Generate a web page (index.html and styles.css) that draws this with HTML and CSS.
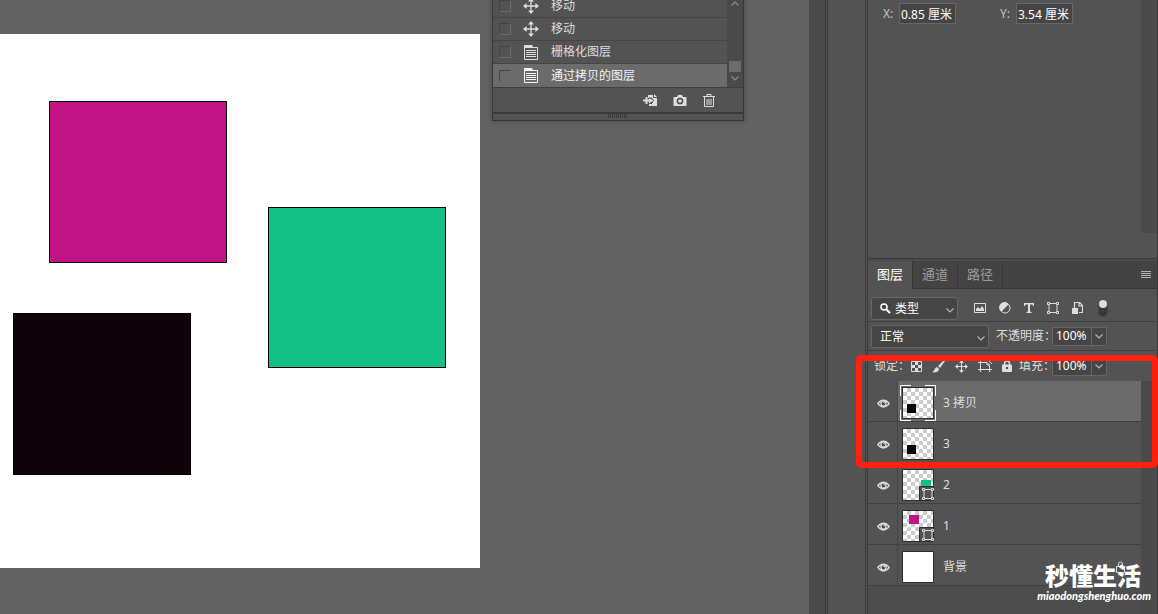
FILE: index.html
```html
<!DOCTYPE html>
<html lang="zh-CN">
<head>
<meta charset="utf-8">
<title>图层</title>
<link rel="stylesheet" href="styles.css">
</head>
<body>
<svg class="defs" aria-hidden="true">
  <defs>
    <pattern id="checker" width="8" height="8" patternUnits="userSpaceOnUse" x="1" y="1">
      <rect width="8" height="8" fill="#fff"/><path d="M4 0h4v4h-4zM0 4h4v4h-4z" fill="#cbcbcb"/>
    </pattern>
    <symbol id="move" viewBox="0 0 16 16"><path d="M8 2v12M2 8h12" stroke="currentColor" stroke-width="1.3"/><path d="M8 0l3 3.6H5zM8 16l3-3.6H5zM0 8l3.6-3v6zM16 8l-3.600-3v6z" fill="currentColor"/></symbol>
    <symbol id="doc" viewBox="0 0 14 15"><path d="M0 0h8l1 2H0z" fill="currentColor"/><path d="M.5 2v12.500h13V2.500H0M2 5.500h10M2 7.500h10M2 9.500h10M2 11.500h10" fill="none" stroke="currentColor"/></symbol>
    <symbol id="chev" viewBox="0 0 8 5"><path d="M.5.5L4 4 7.500.5" fill="none" stroke="currentColor" stroke-width="1.200"/></symbol>
    <symbol id="eye" viewBox="0 0 13 9"><path d="M0 4.500C3.500-1 9.500-1 13 4.500 9.500 10 3.500 10 0 4.500z" fill="currentColor"/><path d="M1.800 4.500C4.500 1 8.500 1 11.200 4.500 8.500 8 4.500 8 1.800 4.500z" fill="#535353"/><circle cx="6.500" cy="4.500" r="3.200" fill="currentColor"/><circle cx="6.500" cy="4.500" r="1.900" fill="#484848"/><circle cx="7.200" cy="3.600" r=".8" fill="currentColor"/></symbol>
    <symbol id="shape" viewBox="0 0 12 12"><path d="M2 2v8M10 2v8M2 1.500h8M2 10.500h8" stroke="currentColor" fill="none"/><path d="M.5.5h2v2h-2zM9.500.5h2v2h-2zM.5 9.500h2v2h-2zM9.500 9.500h2v2h-2z" fill="#484848" stroke="currentColor"/></symbol>
  </defs>
</svg>
<div class="app">
  <main class="workspace">
    <div class="artboard">
      <div class="block pink"></div>
      <div class="block green"></div>
      <div class="block black"></div>
    </div>
    <section class="history" aria-label="历史记录">
      <div class="history-body">
        <ul class="states">
          <li><label><input type="checkbox"><svg class="move-icon"><use href="#move"/></svg><span>移动</span></label></li>
          <li><label><input type="checkbox"><svg class="move-icon"><use href="#move"/></svg><span>移动</span></label></li>
          <li><label><input type="checkbox"><svg class="doc-icon"><use href="#doc"/></svg><span>栅格化图层</span></label></li>
          <li class="current"><label><input type="checkbox"><svg class="doc-icon"><use href="#doc"/></svg><span>通过拷贝的图层</span></label></li>
        </ul>
        <div class="scroll">
          <svg class="chev up"><use href="#chev"/></svg>
          <div class="handle"></div>
          <svg class="chev"><use href="#chev"/></svg>
        </div>
      </div>
      <div class="history-actions">
        <button aria-label="新建文档"><svg width="14" height="12" viewBox="0 0 14 12"><path d="M5 1h5v3h4v8H6v-2h3V4H5z" fill="currentColor"/><path d="M11 0l3 3h-3z" fill="currentColor"/><path d="M0 6.500h7M3.500 3v7" stroke="currentColor" stroke-width="2"/><path d="M6 3.500l4 3-4 3z" fill="currentColor"/><path d="M5.500 4h3l2 2.500-2 3" fill="none" stroke="#535353"/></svg></button>
        <button aria-label="新建快照"><svg width="14" height="11" viewBox="0 0 14 11"><path d="M1 2h3l1-2h4l1 2h3l.5.500v8l-.5.500H1l-.5-.5v-8z" fill="currentColor"/><circle cx="7" cy="6" r="2.600" fill="#ddd" stroke="#4b4b4b" stroke-width="1.500"/></svg></button>
        <button aria-label="删除"><svg width="12" height="13" viewBox="0 0 12 13"><path d="M0 2.500h12M4 2V.5h4V2M1.500 3v9.500h9V3M4 5v6M6 5v6M8 5v6" fill="none" stroke="currentColor"/></svg></button>
      </div>
      <div class="grip"><span></span></div>
    </section>
  </main>
  <div class="gutter"></div>
  <div class="dock"></div>
  <aside class="side">
    <section class="props">
      <div class="fields">
        <div class="field"><label for="px">X:</label><input id="px" type="text" value="0.85 厘米"></div>
        <div class="field"><label for="py">Y:</label><input id="py" type="text" value="3.54 厘米"></div>
      </div>
      <div class="track"></div>
    </section>
    <section class="layers">
      <nav class="tabs">
        <button class="active">图层</button><button>通道</button><button>路径</button>
        <button class="menu" aria-label="菜单"><svg width="10" height="8" viewBox="0 0 10 8"><path d="M0 .5h10M0 2.500h10M0 4.500h10M0 6.500h10" stroke="currentColor"/></svg></button>
      </nav>
      <div class="row filter">
        <div class="select kind">
          <svg class="search" width="11" height="11" viewBox="0 0 11 11"><circle cx="4" cy="4" r="3" fill="none" stroke="currentColor" stroke-width="1.500"/><path d="M6 6l4 4" stroke="currentColor" stroke-width="2.200"/></svg>
          <select aria-label="筛选类型"><option>类型</option></select>
          <svg class="chev"><use href="#chev"/></svg>
        </div>
        <div class="filters">
          <button aria-label="像素图层"><svg width="12" height="10" viewBox="0 0 12 10"><path d="M.5.500h11v9H.5z" fill="none" stroke="currentColor"/><path d="M2 8V6l2-2 2 2 2-3 2 3v2z" fill="currentColor"/></svg></button>
          <button aria-label="调整图层"><svg width="12" height="12" viewBox="0 0 12 12"><circle cx="6" cy="6" r="5" fill="none" stroke="currentColor"/><path d="M9.700 2.300A5.300 5.300 0 1 0 2.300 9.700z" fill="currentColor"/></svg></button>
          <button aria-label="文字图层"><svg width="10" height="10" viewBox="0 0 10 10"><path d="M0 0h10v3H9L8.500 1.500H6V8.500l1.500.5v1h-5V9L4 8.500v-7H1.500L1 3H0z" fill="currentColor"/></svg></button>
          <button aria-label="形状图层"><svg width="12" height="12"><use href="#shape"/></svg></button>
          <button aria-label="智能对象"><svg width="11" height="12" viewBox="0 0 11 12"><path d="M2.500 6V.5h5l3 3v7H7M7 .5V4h3.500" fill="none" stroke="currentColor" stroke-width="1.200"/><path d="M0 6h6v6H0z" fill="currentColor"/></svg></button>
          <button aria-label="打开图层过滤"><svg width="10" height="18" viewBox="0 0 10 18"><rect x=".5" y=".5" width="9" height="17" rx="4.500" fill="#383838" stroke="#474747"/><circle cx="5" cy="5" r="4" fill="#ddd"/></svg></button>
        </div>
      </div>
      <div class="row blend">
        <div class="select mode"><select aria-label="混合模式"><option>正常</option></select><svg class="chev"><use href="#chev"/></svg></div>
        <label for="opacity">不透明度：</label>
        <div class="number"><input id="opacity" type="text" value="100%"><button aria-label="调整不透明度"><svg class="chev"><use href="#chev"/></svg></button></div>
      </div>
      <div class="row lock">
        <span class="lock-label">锁定：</span>
        <div class="locks">
          <button aria-label="锁定透明像素"><svg width="11" height="11" viewBox="0 0 11 11"><path d="M.5.500h10v10H.5z" fill="none" stroke="currentColor"/><path d="M4 1h3v3H4zM1 4h3v3H1zM7 4h3v3H7zM4 7h3v3H4z" fill="currentColor"/></svg></button>
          <button aria-label="锁定图像像素"><svg width="13" height="13" viewBox="0 0 13 13"><path d="M12 0l1 1-5 7-2-2zM5 7l2 2c0 3-4 4-7 3 3-1 2-4 5-5z" fill="currentColor"/></svg></button>
          <button aria-label="锁定位置"><svg width="13" height="13"><use href="#move"/></svg></button>
          <button aria-label="锁定画板"><svg width="14" height="12" viewBox="0 0 14 12"><path d="M0 2.500h9M2.500 0v12M0 9.500h14M11.500 5v7M9 2.500l2.500 2.500M10 0l4 4M9 2.500V5h2.500" fill="none" stroke="currentColor"/></svg></button>
          <button aria-label="全部锁定"><svg width="10" height="12" viewBox="0 0 10 12"><path d="M2.500 5V3.500a2.500 2.500 0 0 1 5 0V5" fill="none" stroke="currentColor" stroke-width="1.500"/><rect y="4.500" width="10" height="7.500" rx="1" fill="currentColor"/><path d="M4 7h2v2H4z" fill="#484848"/></svg></button>
        </div>
        <label for="fill">填充：</label>
        <div class="number"><input id="fill" type="text" value="100%"><button aria-label="调整填充"><svg class="chev"><use href="#chev"/></svg></button></div>
      </div>
      <div class="layer-area">
        <ul class="layer-list">
          <li class="selected"><button class="eye" aria-label="可见性"><svg><use href="#eye"/></svg></button>
            <div class="entry"><svg class="thumb" viewBox="0 0 32 32"><path class="frame" d="M.5.500h31v31H.5z" fill="url(#checker)"/><path d="M5 17h9v9H5z" fill="#0f020b"/><path d="M-1.500 9V-1.500H9M23-1.500H33.500V9M33.500 23V33.500H23M9 33.500H-1.500V23" fill="none" stroke="#fff"/></svg><span>3 拷贝</span></div></li>
          <li><button class="eye" aria-label="可见性"><svg><use href="#eye"/></svg></button>
            <div class="entry"><svg class="thumb" viewBox="0 0 32 32"><path class="frame" d="M.5.500h31v31H.5z" fill="url(#checker)"/><path d="M5 17h9v9H5z" fill="#0f020b"/></svg><span>3</span></div></li>
          <li><button class="eye" aria-label="可见性"><svg><use href="#eye"/></svg></button>
            <div class="entry"><svg class="thumb" viewBox="0 0 32 32"><path class="frame" d="M.5.500h31v31H.5z" fill="url(#checker)"/><path d="M19 11h10v7H19z" fill="#14c086"/><path d="M17.500 17.500h14v14h-14z" fill="#535353" stroke="#2d2d2d"/><use href="#shape" x="20" y="19" width="12" height="12"/></svg><span>2</span></div></li>
          <li><button class="eye" aria-label="可见性"><svg><use href="#eye"/></svg></button>
            <div class="entry"><svg class="thumb" viewBox="0 0 32 32"><path class="frame" d="M.5.500h31v31H.5z" fill="url(#checker)"/><path d="M7 5h10v9H7z" fill="#c01385"/><path d="M17.500 17.500h14v14h-14z" fill="#535353" stroke="#2d2d2d"/><use href="#shape" x="20" y="19" width="12" height="12"/></svg><span>1</span></div></li>
          <li><button class="eye" aria-label="可见性"><svg><use href="#eye"/></svg></button>
            <div class="entry"><svg class="thumb" viewBox="0 0 32 32"><path class="frame" d="M.5.500h31v31H.5z" fill="#fff"/></svg><span>背景</span><svg class="padlock" width="9" height="12" viewBox="0 0 9 12"><path d="M.5 5.500h8v6h-8zM2.500 5V3a2 2 0 0 1 4 0v2" fill="none" stroke="currentColor"/></svg></div></li>
        </ul>
        <div class="track"></div>
      </div>
    </section>
    <div class="highlight"></div>
    <div class="watermark"><strong>秒懂生活</strong><em>miaodongshenghuo.com</em></div>
  </aside>
</div>
</body>
</html>
```
FILE: styles.css
```css
* { box-sizing: border-box; }
body {
  margin: 0;
  overflow: hidden;
  background: #626262;
  color: #dedede;
  font: 12px/16px "Noto Sans", "Noto Sans CJK SC", sans-serif;
}
ul { margin: 0; padding: 0; list-style: none; }
svg { display: block; flex: none; }
button, input, select { margin: 0; padding: 0; border: 0; background: none; color: inherit; font: inherit; }
button { display: flex; align-items: center; justify-content: center; }
.defs { position: absolute; width: 0; height: 0; }
.app { display: flex; height: 100vh; }
.chev { width: 8px; height: 5px; color: #b4b4b4; }
.chev.up { transform: rotate(180deg); }

.workspace { flex: 1; position: relative; overflow: hidden; }
.artboard { position: absolute; left: 0; top: 34px; width: 480px; height: 534px; background: #fff; }
.block { position: absolute; width: 178px; height: 162px; border: 1px solid #000; }
.pink { left: 49px; top: 67px; background: #c01385; }
.green { left: 268px; top: 173px; height: 161px; background: #14c086; }
.black { left: 13px; top: 279px; background: #0f020b; }

.history {
  position: absolute;
  left: 492px;
  top: -6px;
  width: 252px;
  background: #535353;
  border: 1px solid #383838;
  box-shadow: 0 0 5px #0004;
}
.history-body { display: flex; border-bottom: 1px solid #404040; }
.states { flex: 1; }
.states li { border-bottom: 1px solid #454545; }
.states label { display: flex; align-items: center; height: 22px; padding-left: 6px; }
.states .current { background: #6b6b6b; border-bottom: 0; color: #f4f4f4; }
.states .current label { height: 23px; }
.states input {
  appearance: none;
  width: 12px;
  height: 12px;
  border: 1px solid;
  border-color: #444 #6b6b6b #6b6b6b #444;
}
.move-icon, .doc-icon { width: 16px; height: 16px; margin: 0 12px; }
.doc-icon { height: 15px; }
.scroll {
  display: flex;
  flex-direction: column;
  align-items: center;
  justify-content: flex-end;
  gap: 4px;
  width: 16px;
  padding: 6px 0;
  background: #4a4a4a;
}
.scroll .up { margin-bottom: auto; }
.scroll .chev { color: #8c8c8c; }
.handle { width: 12px; height: 11px; background: #6b6b6b; }
.history-actions { display: flex; justify-content: flex-end; gap: 16px; height: 26px; padding-right: 28px; border-bottom: 2px solid #3a3a3a; }
.grip { display: flex; justify-content: center; height: 6px; }
.grip span { width: 20px; height: 4px; background: repeating-linear-gradient(90deg, #3c3c3c 0 1px, #535353 1px 2px); }

.gutter { width: 16px; background: #4a4a4a; }
.dock { width: 43px; background: #535353; border: 0 double #3b3b3b; border-width: 0 3px; }
.side { position: relative; display: flex; flex-direction: column; width: 290px; background: #535353; border-right: 1px solid #383838; }
.track { width: 16px; background: #4a4a4a; }

.props { display: flex; padding-bottom: 25px; border-bottom: 1px solid #383838; }
.props .track { height: 233px; }
.fields { flex: 1; display: flex; gap: 44px; align-items: flex-start; padding: 3px 0 0 15px; }
.field { display: flex; align-items: center; }
.field label { width: 16px; color: #c4c4c4; }
.field input { width: 57px; height: 21px; padding-left: 1px; background: #454545; border: 1px solid #666; color: #fff; }

.layers { flex: 1; display: flex; flex-direction: column; border-top: 2px solid #4a4a4a; }
.tabs { display: flex; height: 28px; background: #434343; border-bottom: 1px solid #383838; color: #9c9c9c; }
.tabs button { width: 45px; padding-bottom: 2px; border-right: 1px solid #383838; font-size: 13px; }
.tabs .active { height: 28px; background: #535353; color: #fff; }
.tabs .menu { width: 10px; margin: 0 6px 0 auto; padding: 0; border: 0; color: #b4b4b4; }
.row { display: flex; align-items: center; padding-left: 3px; }
.filter { height: 33px; padding-top: 6px; border-bottom: 1px solid #404040; }
.blend { height: 29px; border-bottom: 1px solid #404040; }
.lock { height: 30px; padding-left: 6px; }
.select { position: relative; display: flex; align-items: center; height: 23px; background: #454545; border: 1px solid #666; border-radius: 3px; color: #fff; }
.select select { appearance: none; width: 100%; height: 100%; padding: 2px 0 0 8px; outline: 0; }
.select .chev { position: absolute; right: 3px; top: 10px; pointer-events: none; }
.kind { width: 87px; }
.kind .search { margin-left: 8px; }
.kind select { padding-left: 4px; }
.mode { width: 118px; margin-right: 7px; }
.filters { display: flex; flex: 1; align-items: center; gap: 13px; padding-left: 16px; }
.filters button:last-child { margin-left: 2px; }
.blend label { width: 56px; white-space: nowrap; }
.number { display: flex; height: 19px; background: #454545; border: 1px solid #666; border-radius: 2px; }
.number input { width: 38px; padding-left: 3px; color: #fff; }
.number button { width: 15px; border-left: 1px solid #666; }
.lock-label { width: 37px; white-space: nowrap; }
.locks { display: flex; align-items: center; gap: 10px; margin-right: 7px; }
.lock label { width: 33px; white-space: nowrap; }

.layer-area { flex: 1; display: flex; background: #4d4d4d; }
.layer-list { flex: 1; }
.layer-list li { display: flex; height: 41px; background: #535353; border-bottom: 1px solid #404040; }
.eye { width: 30px; border-right: 1px solid #454545; padding: 4px 0 0 1px; }
.eye svg { width: 13px; height: 9px; }
.entry { display: flex; flex: 1; align-items: center; gap: 9px; padding: 3px 16px 0 4px; }
.selected .entry { background: #6b6b6b; }
.thumb { width: 32px; height: 32px; overflow: visible; }
.frame { stroke: #2d2d2d; }
.padlock { margin-left: auto; }

.highlight { position: absolute; left: -12px; right: -1px; top: 355px; height: 113px; border: 6px solid #ff2010; border-radius: 5px; }
.watermark { position: absolute; right: 6px; top: 561px; display: flex; flex-direction: column; align-items: flex-end; color: #fff; }
.watermark strong { margin-right: 10px; font: 900 24px/28px "Noto Sans CJK SC", sans-serif; }
.watermark em { font: italic 900 11px/14px Lato, sans-serif; }
```
